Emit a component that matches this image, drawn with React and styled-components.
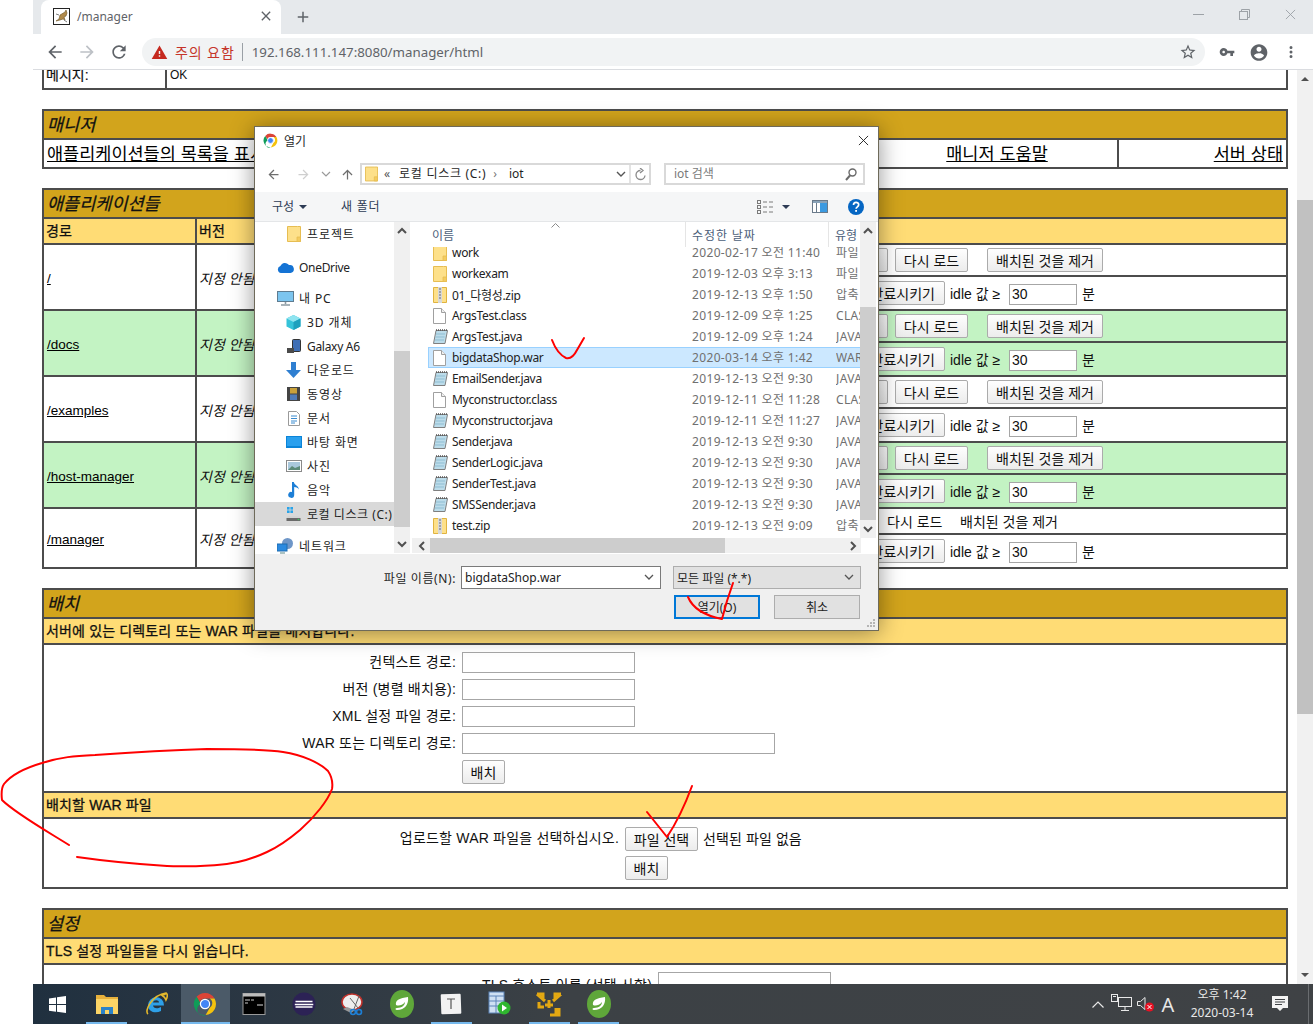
import React from 'react';
import styled, { createGlobalStyle } from 'styled-components';

const PAGE_FONT = '"Liberation Sans","Noto Sans CJK KR",sans-serif';
const UI_FONT = '"Noto Sans","Noto Sans CJK KR",sans-serif';
const COLS = '153px 130px 200px 70px 70px 1fr';

const Global = createGlobalStyle`
  html, body { margin: 0; padding: 0; background: #fff; }
  * { box-sizing: border-box; }
`;

const Root = styled.div`
  position: relative;
  width: 1313px;
  height: 1024px;
  overflow: hidden;
  padding-left: 33px;
  background: #fff;
  font-family: ${PAGE_FONT};
  color: #111;
`;
const Win = styled.div`
  display: flex;
  flex-direction: column;
  height: 100%;
`;

/* Chrome */
const TabStrip = styled.div`
  height: 34px;
  background: #e6e9ec;
  display: flex;
  align-items: flex-end;
  padding-left: 8px;
  flex: none;
`;
const Tab = styled.div`
  width: 240px;
  height: 34px;
  background: #fff;
  border-radius: 8px 8px 0 0;
  display: flex;
  align-items: center;
  padding: 0 10px 2px 12px;
  font: 12px ${UI_FONT};
  color: #5f6368;
`;
const TabTitle = styled.span`
  margin-left: 7px;
  flex: 1;
`;
const Plus = styled.div`
  margin: 0 0 8px 13px;
  height: 18px;
  width: 18px;
  color: #5f6368;
`;
const WinCtl = styled.div`
  margin-left: auto;
  display: flex;
  height: 34px;
  align-self: flex-start;
`;
const WinBtn = styled.div`
  width: 46px;
  height: 29px;
  display: flex;
  align-items: center;
  justify-content: center;
  color: #9da2a7;
`;
const ToolBar = styled.div`
  height: 36px;
  flex: none;
  background: #fff;
  border-bottom: 1px solid #dadce0;
  display: flex;
  align-items: center;
  padding: 1px 0 0 6px;
`;
const NavIcon = styled.div`
  width: 32px;
  flex: none;
  display: flex;
  justify-content: center;
  color: ${p => p.$c || '#5f6368'};
`;
const Omni = styled.div`
  margin-left: 7px;
  width: 1063px;
  flex: none;
  height: 28px;
  border-radius: 14px;
  background: #f1f3f4;
  display: flex;
  align-items: center;
  padding: 0 8px 0 9px;
`;
const WarnIcon = styled.span`
  color: #c5291f;
  display: flex;
`;
const Warn = styled.span`
  color: #c5352a;
  font: 14px ${UI_FONT};
  letter-spacing: 0.9px;
  margin-left: 7px;
`;
const Sep = styled.span`
  width: 1px;
  height: 18px;
  background: #9aa0a6;
  margin: 0 9px 0 7px;
`;
const Url = styled.span`
  font: 13.3px ${UI_FONT};
  color: #5f6368;
`;
const StarSlot = styled.span`
  margin-left: auto;
  display: flex;
  color: #5f6368;
`;
const RightIcon = styled.div`
  width: ${p => p.$w}px;
  flex: none;
  display: flex;
  justify-content: center;
  color: #5f6368;
`;

/* Page */
const Viewport = styled.div`
  flex: none;
  height: 914px;
  display: flex;
  overflow: hidden;
`;
const Page = styled.div`
  width: 1264px;
  padding: 0 9px;
  font-size: 14px;
`;
const Scrollbar = styled.div`
  width: 16px;
  background: #f1f1f1;
  display: flex;
  flex-direction: column;
`;
const Arrow = styled.div`
  height: 18px;
  display: flex;
  align-items: center;
  justify-content: center;
  flex: none;
`;
const Tri = styled.i`
  width: 0;
  height: 0;
  border-left: 4px solid transparent;
  border-right: 4px solid transparent;
  ${p => (p.$down ? 'border-top: 4px solid #505050;' : 'border-bottom: 4px solid #505050;')}
`;
const Thumb = styled.div`
  height: ${p => p.$h}px;
  margin-top: ${p => p.$mt || 0}px;
  background: ${p => p.$c || '#c1c1c1'};
  flex: none;
`;
const Spring_ = styled.div`
  flex: 1;
`;
const Section = styled.section`
  border: 2px solid #4c4c4c;
  margin-top: ${p => p.$mt ?? 19}px;
`;
const Title = styled.div`
  height: 27px;
  background: #d2a41c;
  font-style: italic;
  font-size: 17.5px;
  line-height: 29px;
  padding-left: 3px;
  -webkit-text-stroke: 0.25px #111;
  overflow: hidden;
`;
const Sub = styled.div`
  height: 24px;
  background: #ffdc75;
  border-top: 2px solid #4c4c4c;
  box-sizing: content-box;
  -webkit-text-stroke: 0.3px #111;
  letter-spacing: 0.15px;
  line-height: 24px;
  padding-left: ${p => (p.$grid ? 0 : 2)}px;
  display: ${p => (p.$grid ? 'grid' : 'block')};
  grid-template-columns: ${p => (p.$grid ? COLS : 'none')};
`;
const MsgRow = styled.div`
  height: 26px;
  display: flex;
  align-items: center;
`;
const MsgHead = styled.div`
  width: 123px;
  height: 100%;
  border-right: 2px solid #4c4c4c;
  padding-left: 2px;
  line-height: 26px;
  -webkit-text-stroke: 0.2px #111;
`;
const MsgText = styled.div`
  padding-left: 3px;
  font-size: 12px;
`;
const MgrRow = styled.div`
  height: 27px;
  border-top: 2px solid #4c4c4c;
  box-sizing: content-box;
  display: grid;
  grid-template-columns: 833px 242px 1fr;
  font-size: 17.5px;
  line-height: 29px;
`;
const MgrCell = styled.div`
  text-align: ${p => p.$a || 'left'};
  padding: 0 3px;
  border-right: ${p => (p.$line ? 2 : 0)}px solid #4c4c4c;
  white-space: nowrap;
  height: 27px;
  a { color: #000; text-decoration: underline; }
`;
const AppRowBox = styled.div`
  display: grid;
  grid-template-columns: ${COLS};
  border-top: 2px solid #4c4c4c;
  background: ${p => (p.$green ? '#c3f3c3' : '#fff')};
`;
const Cell = styled.div`
  border-right: 2px solid #4c4c4c;
  padding: 2px 0 0 ${p => (p.$i ? 2 : 3)}px;
  display: flex;
  align-items: center;
  font-style: ${p => (p.$i ? 'italic' : 'normal')};
  a { color: #000; text-decoration: underline; font-size: 13.5px; }
`;
const HeadCell = styled.div`
  border-right: 2px solid #4c4c4c;
  height: 24px;
  padding-left: 2px;
`;
const HeadLast = styled.div`
  padding-left: 2px;
`;
const Cmds = styled.div`
  display: flex;
  flex-direction: column;
`;
const CmdRow = styled.div`
  height: ${p => p.$h}px;
  display: flex;
  align-items: center;
  padding-left: ${p => p.$pl}px;
  border-top: ${p => (p.$line ? 2 : 0)}px solid #4c4c4c;
  box-sizing: content-box;
`;
const Btn = styled.button`
  width: ${p => p.$w}px;
  height: 24px;
  margin-left: ${p => p.$ml || 0}px;
  padding: 0;
  flex: none;
  font: 14px ${PAGE_FONT};
  color: #111;
  border: 1px solid #ababab;
  border-radius: 2px;
  background: linear-gradient(#fefefe, #ececec);
`;
const Plain = styled.span`
  width: ${p => p.$w}px;
  margin-left: ${p => p.$ml || 0}px;
  flex: none;
  white-space: nowrap;
`;
const Txt = styled.input`
  width: ${p => p.$w}px;
  height: 21px;
  flex: none;
  margin-left: ${p => p.$ml || 0}px;
  margin-top: ${p => p.$mt || 0}px;
  padding: 0 2px;
  font: 14px ${PAGE_FONT};
  color: #111;
  background: #fff;
  border: 1px solid #a6a6a6;
`;
const Form = styled.div`
  border-top: 2px solid #4c4c4c;
  height: ${p => p.$h}px;
  box-sizing: content-box;
  padding-top: ${p => p.$pt}px;
  display: flex;
  flex-direction: column;
`;
const Field = styled.div`
  height: ${p => p.$h || 27}px;
  display: grid;
  grid-template-columns: ${p => p.$label}px auto;
  column-gap: 6px;
  align-items: flex-start;
  justify-content: start;
`;
const Label = styled.div`
  text-align: right;
  line-height: ${p => p.$lh || 21}px;
  white-space: nowrap;
  letter-spacing: 0.2px;
`;
const Inline = styled.div`
  display: flex;
  align-items: center;
  gap: 5px;
  white-space: nowrap;
  letter-spacing: 0.1px;
`;
const Note = styled.span`
  margin-bottom: 3px;
`;

/* Taskbar */
const Taskbar = styled.div`
  height: 40px;
  flex: none;
  display: flex;
  background: linear-gradient(90deg, #20303f 0%, #2b3743 18%, #3c4145 42%, #3f4245 100%);
  color: #e8e8e8;
`;
const TaskItem = styled.div`
  position: relative;
  width: 49.2px;
  display: flex;
  align-items: center;
  justify-content: center;
  background: ${p => (p.$active ? '#4b5a68' : 'transparent')};
  &::after {
    content: '';
    display: ${p => (p.$open ? 'block' : 'none')};
    position: absolute;
    left: ${p => (p.$active ? 0 : 4)}px;
    right: ${p => (p.$active ? 0 : 4)}px;
    bottom: 0;
    height: 2px;
    background: #76b9ed;
  }
`;
const Tray = styled.div`
  margin-left: auto;
  display: flex;
  align-items: center;
`;
const TrayItem = styled.div`
  width: ${p => p.$w}px;
  display: flex;
  justify-content: center;
  align-items: center;
`;
const Clock = styled.div`
  width: 70px;
  margin: 0 1px 0 9px;
  text-align: center;
  font: 12px/18px ${UI_FONT};
`;
const Imeletter = styled.span`
  font: 20px ${UI_FONT};
  color: #e8e8e8;
`;
const EdgeLine = styled.div`
  width: 11px;
  height: 40px;
  position: relative;
  &::after {
    content: '';
    position: absolute;
    left: 6px;
    top: 0;
    bottom: 0;
    width: 1px;
    background: #6a6d70;
  }
`;

/* Dialog */
const Dialog = styled.div`
  position: absolute;
  left: 254px;
  top: 126px;
  width: 625px;
  height: 505px;
  background: #fff;
  border: 1px solid #6e6a5a;
  box-shadow: 0 2px 22px rgba(0, 0, 0, 0.42);
  display: flex;
  flex-direction: column;
  font: 12px ${UI_FONT};
  color: #1e1e1e;
`;
const DTitle = styled.div`
  height: 29px;
  flex: none;
  display: flex;
  align-items: center;
  padding: 0 9px 2px 8px;
  gap: 6px;
`;
const DClose = styled.div`
  margin-left: auto;
  display: flex;
`;
const DAddr = styled.div`
  height: 36px;
  flex: none;
  display: flex;
  padding-top: 7px;
`;
const Slot = styled.div`
  width: ${p => p.$w}px;
  height: 22px;
  flex: none;
  display: flex;
  align-items: center;
  justify-content: center;
  color: ${p => p.$c || '#6e6e6e'};
`;
const AddrBox = styled.div`
  width: ${p => p.$w}px;
  height: 22px;
  margin-left: ${p => p.$ml}px;
  border: 2px solid #d9d9d9;
  flex: none;
  display: flex;
  align-items: center;
  padding: 0 0 0 ${p => p.$pl || 3}px;
  color: ${p => p.$c || '#1e1e1e'};
  white-space: nowrap;
`;
const Crumb = styled.span`
  margin-left: ${p => p.$ml || 0}px;
  margin-bottom: 2px;
  color: ${p => p.$c || 'inherit'};
  letter-spacing: ${p => p.$ls || 0}px;
`;
const AddrEnd = styled.div`
  margin-left: auto;
  display: flex;
  align-items: center;
  height: 100%;
  padding-right: ${p => p.$pr || 0}px;
`;
const AddrDiv = styled.div`
  width: 20px;
  height: 100%;
  border-left: 2px solid #e3e3e3;
  margin-left: 3px;
  display: flex;
  align-items: center;
  justify-content: center;
  color: #8a8a8a;
`;
const DTools = styled.div`
  height: 30px;
  flex: none;
  background: #f5f6f7;
  border-bottom: 1px solid #e4e6e8;
  display: flex;
  align-items: center;
  padding-left: 17px;
  color: #2d3b55;
`;
const DropTri = styled.i`
  width: 0;
  height: 0;
  margin-left: ${p => p.$ml || 5}px;
  border-left: 4px solid transparent;
  border-right: 4px solid transparent;
  border-top: 4px solid #2d3b55;
`;
const ToolRight = styled.div`
  margin-left: auto;
  display: flex;
  align-items: center;
  padding-right: 14px;
`;
const ToolGap = styled.span`
  width: ${p => p.$w}px;
`;
const DBody = styled.div`
  height: 332px;
  flex: none;
  display: flex;
`;
const NavPane = styled.div`
  width: 139px;
  flex: none;
  overflow: hidden;
`;
const NavRow = styled.div`
  height: 24px;
  margin-top: ${p => p.$mt || 0}px;
  display: flex;
  align-items: center;
  padding-left: ${p => p.$pl}px;
  gap: 5px;
  white-space: nowrap;
  background: ${p => (p.$sel ? '#d9d9d9' : 'transparent')};
  letter-spacing: ${p => p.$ls ?? -0.3}px;
  color: #222;
`;
const NavGlyph = styled.span`
  width: 17px;
  flex: none;
  display: flex;
  justify-content: center;
`;
const DScroll = styled.div`
  width: 16px;
  flex: none;
  height: ${p => (p.$h ? p.$h + 'px' : 'auto')};
  background: #f0f0f0;
  display: flex;
  flex-direction: column;
  margin-right: ${p => p.$mr || 0}px;
`;
const Chev = styled.div`
  height: ${p => p.$h || 17}px;
  width: ${p => (p.$w ? p.$w + 'px' : 'auto')};
  flex: none;
  display: flex;
  align-items: center;
  justify-content: center;
  color: #505050;
`;
const ListWrap = styled.div`
  flex: 1;
  display: flex;
  flex-direction: column;
  min-width: 0;
`;
const ListTop = styled.div`
  height: 316px;
  display: flex;
`;
const ListMain = styled.div`
  width: 449px;
  display: flex;
  flex-direction: column;
`;
const ListHead = styled.div`
  height: 25px;
  flex: none;
  display: grid;
  grid-template-columns: 275px 143px 1fr;
  color: #4c607a;
  background: #fff;
  position: relative;
`;
const HeadCol = styled.div`
  padding: 4px 0 0 ${p => p.$pl}px;
  border-right: ${p => (p.$line ? 1 : 0)}px solid #e5e5e5;
  letter-spacing: ${p => p.$ls || 0}px;
  white-space: nowrap;
  overflow: hidden;
`;
const SortMark = styled.div`
  position: absolute;
  left: 140px;
  top: 1px;
  color: #8a8a8a;
  display: flex;
`;
const Rows = styled.div`
  flex: 1;
  overflow: hidden;
`;
const RowsInner = styled.div`
  margin: -5px 0 0 17px;
`;
const FileRow = styled.div`
  height: 21px;
  width: 433px;
  display: grid;
  grid-template-columns: 19px 240px 144px 25px;
  align-items: center;
  padding-left: 5px;
  background: ${p => (p.$sel ? '#cce8ff' : 'transparent')};
  box-shadow: ${p => (p.$sel ? 'inset 0 0 0 1px #99d1ff' : 'none')};
  white-space: nowrap;
`;
const FileName = styled.span`
  color: #222;
  letter-spacing: -0.3px;
`;
const FileMeta = styled.span`
  color: #707070;
  overflow: hidden;
  letter-spacing: 0.35px;
  margin-top: -1px;
`;
const HBar = styled.div`
  height: 15px;
  width: 449px;
  margin-left: 1px;
  background: #f0f0f0;
  display: flex;
  align-items: center;
`;
const HThumb = styled.div`
  height: 15px;
  width: 295px;
  background: #cdcdcd;
`;
const DFoot = styled.div`
  flex: 1;
  background: #f0f0f0;
  position: relative;
  display: flex;
  flex-direction: column;
  padding-top: 12px;
`;
const FootRow = styled.div`
  display: flex;
  align-items: center;
  justify-content: ${p => (p.$end ? 'flex-end' : 'flex-start')};
  gap: ${p => p.$gap || 0}px;
  margin-top: ${p => p.$mt || 0}px;
  padding-right: ${p => p.$pr || 0}px;
`;
const FootLabel = styled.div`
  width: 201px;
  text-align: right;
  letter-spacing: 0.6px;
`;
const Combo = styled.div`
  width: ${p => p.$w}px;
  height: 23px;
  margin-left: ${p => p.$ml}px;
  display: flex;
  align-items: center;
  justify-content: space-between;
  padding: 0 6px 0 3px;
  background: ${p => (p.$gray ? '#e1e1e1' : '#fff')};
  border: 1px solid ${p => (p.$gray ? '#adadad' : '#7a7a7a')};
  color: #222;
`;
const DlgBtn = styled.button`
  width: 86px;
  height: 24px;
  padding: 0;
  font: 12px ${UI_FONT};
  color: #222;
  background: #e1e1e1;
  border: ${p => (p.$primary ? '2px solid #0078d7' : '1px solid #adadad')};
`;
const Grip = styled.div`
  position: absolute;
  right: 2px;
  bottom: 2px;
  display: flex;
`;

const Ink = styled.svg`
  position: absolute;
  left: 0;
  top: 0;
  pointer-events: none;
`;

/* ---- icons ---- */
const M = ({ d, s = 20, fill = 'currentColor' }) => (
  <svg width={s} height={s} viewBox="0 0 24 24" fill={fill}><path d={d} /></svg>
);
const CX = ({ s = 12, w = 1 }) => (
  <svg width={s} height={s} viewBox="0 0 12 12" stroke="currentColor" strokeWidth={w} fill="none"><path d="M1 1l10 10M11 1L1 11" /></svg>
);
const ChevUp = ({ c = '#505050' }) => (
  <svg width="10" height="7" viewBox="0 0 10 7" fill="none" stroke={c} strokeWidth="2"><path d="M1 6l4-4 4 4" /></svg>
);
const ChevDown = ({ c = '#505050', w = 2 }) => (
  <svg width="10" height="7" viewBox="0 0 10 7" fill="none" stroke={c} strokeWidth={w}><path d="M1 1l4 4 4-4" /></svg>
);
const ChevSide = ({ left }) => (
  <svg width="7" height="10" viewBox="0 0 7 10" fill="none" stroke="#505050" strokeWidth="2">
    <path d={left ? 'M6 1L2 5l4 4' : 'M1 1l4 4-4 4'} />
  </svg>
);
const ChromeIcon = ({ s = 15 }) => (
  <svg width={s} height={s} viewBox="0 0 24 24">
    <path d="M12 1a11 11 0 0 1 9.500 5.500H12a5.500 5.500 0 0 0-5.200 3.600L3.600 4.800A11 11 0 0 1 12 1z" fill="#db4437" />
    <path d="M21.500 6.500A11 11 0 0 1 12.600 23l4.200-7.300a5.500 5.500 0 0 0 0-9.200z" fill="#f4c20d" />
    <path d="M3.600 4.800l4.200 7.200a5.500 5.500 0 0 0 4.800 11A11 11 0 0 1 3.600 4.800z" fill="#0f9d58" />
    <circle cx="12" cy="12" r="4.600" fill="#4285f4" stroke="#fff" strokeWidth="1.200" />
  </svg>
);
const TomcatIcon = () => (
  <svg width="17" height="17" viewBox="0 0 17 17">
    <rect x=".5" y=".5" width="16" height="16" fill="#fff" stroke="#222" />
    <path d="M3 13l3-2 1-4 5-3 1-2 1 3-1 3-2 1 1 3-2-1-3 1z" fill="#b08a4a" stroke="#6b5222" strokeWidth=".6" />
    <path d="M3 6l3 1M11 12l3 2" stroke="#7d7d7d" strokeWidth="1" />
  </svg>
);
const Folder = ({ s = 14, h = 16 }) => (
  <svg width={s} height={h} viewBox="0 0 14 16">
    <path d="M.5.5h10l3 0v15H.5z" fill="#fde08a" stroke="#e6bd52" />
    <path d="M10 11v4.500h3.500V11z" fill="#f4cc60" stroke="#e6bd52" strokeWidth=".8" />
  </svg>
);
const Zip = () => (
  <svg width="14" height="16" viewBox="0 0 14 16">
    <path d="M.5.5h13v15H.5z" fill="#fde08a" stroke="#e0b440" />
    <rect x="5" y="0" width="4" height="16" fill="#d8d8d8" />
    <path d="M6 2h2M6 5h2M6 8h2M6 11h2" stroke="#6a6a6a" />
  </svg>
);
const Doc = () => (
  <svg width="13" height="16" viewBox="0 0 13 16">
    <path d="M.5.5h8l4 4v11H.5z" fill="#fff" stroke="#a0a0a0" />
    <path d="M8.500.5v4h4" fill="#f0f0f0" stroke="#a0a0a0" />
  </svg>
);
const Java = () => (
  <svg width="15" height="15" viewBox="0 0 15 15">
    <path d="M3 1.500h11.500L12 14.500H.5z" fill="#bcdcea" stroke="#7f7f7f" />
    <path d="M3 1h11" stroke="#555" strokeDasharray="1 1" strokeWidth="1.500" />
    <path d="M3 5h9M2.600 8h9M2 11h9" stroke="#8fbdd2" />
  </svg>
);
const Cloud = () => (
  <svg width="17" height="11" viewBox="0 0 17 11">
    <path d="M4 11a3.600 3.600 0 0 1-.6-7A5 5 0 0 1 12 3a4 4 0 0 1 1.500 8z" fill="#1473d4" />
  </svg>
);
const Monitor = () => (
  <svg width="17" height="15" viewBox="0 0 17 15">
    <rect x=".5" y=".5" width="16" height="10" fill="#7cc5ef" stroke="#5f7c90" />
    <path d="M8.500 11v2M4 14h9" stroke="#8c9aa3" strokeWidth="1.600" />
  </svg>
);
const Cube = () => (
  <svg width="15" height="15" viewBox="0 0 15 15">
    <path d="M7.500 0l7 3.500v8L7.500 15 .5 11.500v-8z" fill="#35c3d9" />
    <path d="M7.500 0l7 3.500-7 3.500-7-3.500z" fill="#8fe4f0" />
    <path d="M7.500 7v8l7-3.500v-8z" fill="#1ea0bd" />
  </svg>
);
const Phone = () => (
  <svg width="14" height="15" viewBox="0 0 14 15">
    <rect x="5.500" y=".5" width="8" height="12" rx="1" fill="#3f6fb5" stroke="#333" />
    <rect x="0" y="9" width="7" height="5" fill="#4a4a4a" />
  </svg>
);
const Down = () => (
  <svg width="15" height="16" viewBox="0 0 15 16"><path d="M5 0h5v8h5l-7.500 8L0 8h5z" fill="#2f7fd1" /></svg>
);
const Film = () => (
  <svg width="13" height="14" viewBox="0 0 13 14">
    <rect width="13" height="14" fill="#444" />
    <rect x="3" y="1" width="7" height="5.500" fill="#c9a13a" />
    <rect x="3" y="7.500" width="7" height="5.500" fill="#4f7cb8" />
  </svg>
);
const DocLines = () => (
  <svg width="12" height="15" viewBox="0 0 12 15">
    <path d="M.5.5h8l3 3v11H.5z" fill="#fff" stroke="#9a9a9a" />
    <path d="M3 5h6M3 7.500h6M3 10h6M3 12h4" stroke="#3a8cd0" />
  </svg>
);
const Desk = () => (
  <svg width="16" height="12" viewBox="0 0 16 12"><rect width="16" height="12" fill="#0a84d8" /><rect x="1" y="1" width="14" height="9" fill="#2aa0ee" /></svg>
);
const Photo = () => (
  <svg width="16" height="12" viewBox="0 0 16 12">
    <rect x=".5" y=".5" width="15" height="11" fill="#fff" stroke="#8a8a8a" />
    <rect x="2" y="2" width="12" height="8" fill="#a9c8dc" />
    <path d="M2 10l4-4 3 2 5-2v4z" fill="#5b8a78" />
  </svg>
);
const Music = () => (
  <svg width="12" height="16" viewBox="0 0 12 16"><path d="M4 0h1.800c.4 3 5 3.500 5 7.500-1-1.800-3-2.200-4.600-2.400V13a3 3 0 1 1-2.200-3z" fill="#1d7fd6" /></svg>
);
const Disk = () => (
  <svg width="15" height="14" viewBox="0 0 15 14">
    <rect x="1" y="0" width="2.600" height="2.600" fill="#29a3e8" /><rect x="4.400" y="0" width="2.600" height="2.600" fill="#29a3e8" />
    <rect x="1" y="3.400" width="2.600" height="2.600" fill="#29a3e8" /><rect x="4.400" y="3.400" width="2.600" height="2.600" fill="#29a3e8" />
    <path d="M2 9h11l1.500 2v3H.5v-3z" fill="#d4d4d4" /><rect x=".5" y="11" width="14" height="3" fill="#6a6a6a" />
    <circle cx="12.500" cy="12.500" r=".8" fill="#34d058" />
  </svg>
);
const Network = () => (
  <svg width="17" height="16" viewBox="0 0 17 16">
    <circle cx="10.500" cy="5.500" r="5.500" fill="#6e96c8" />
    <rect y="6" width="10" height="7" fill="#2b8ae0" stroke="#1f6cb0" />
    <path d="M3 15h5" stroke="#8aa" strokeWidth="1.400" />
  </svg>
);
const WinLogo = () => (
  <svg width="17" height="17" viewBox="0 0 17 17" fill="#fff">
    <path d="M0 2.400l7-1v6.700H0zM8 1.200L17 0v8.100H8zM0 9h7v6.700l-7-1zM8 9h9v8l-9-1.200z" />
  </svg>
);
const Explorer = () => (
  <svg width="22" height="22" viewBox="0 0 22 22">
    <path d="M0 2h8l2 2h12v16H0z" fill="#e7b13c" />
    <rect y="6" width="22" height="15" fill="#fbd466" />
    <rect x="5" y="14" width="12" height="7" fill="#2a82c9" />
    <rect x="9" y="17" width="4" height="4" fill="#fbd466" />
  </svg>
);
const IE = () => (
  <svg width="24" height="24" viewBox="0 0 24 24">
    <path d="M12 5a8 8 0 0 1 8 8.500H9c.3 2.500 3.600 4 8 1.500v4c-5.400 3-13 1-13-6a8.500 8.500 0 0 1 8-8zM9 10.500h6c0-3-5.500-3-6 0z" fill="#2ea0e8" />
    <path d="M4 22C0 19 8 3 22 1c1.500 1 1.500 4 0 7-1-3-3-4-4-4.600 2-1 3-1 3.500-.4" fill="none" stroke="#e5b92c" strokeWidth="1.600" />
  </svg>
);
const Cmd = () => (
  <svg width="24" height="24" viewBox="0 0 24 24">
    <rect x="1" y="1.500" width="22" height="21" fill="#000" stroke="#9a9a9a" />
    <rect x="1" y="1.500" width="22" height="3" fill="#bdbdbd" />
    <path d="M3 8h5M9 8h3M3 11h3" stroke="#ccc" />
    <path d="M15 13h6" stroke="#ddd" />
  </svg>
);
const Eclipse = () => (
  <svg width="24" height="24" viewBox="0 0 24 24">
    <circle cx="12" cy="12" r="11.500" fill="#2c2255" />
    <path d="M12 .5a11.500 11.500 0 0 0 0 23 11 11 0 0 1 0-23z" fill="#f7941e" />
    <path d="M3.500 9.500h17M2.800 12.500h18.500M3.500 15h17" stroke="#fff" strokeWidth="1.500" />
  </svg>
);
const Snip = () => (
  <svg width="26" height="24" viewBox="0 0 26 24">
    <ellipse cx="12" cy="10" rx="10" ry="8" fill="#eee" stroke="#c0312b" strokeWidth="1.500" />
    <path d="M3 17l8 4 4-3-8-3z" fill="#999" />
    <path d="M10 6l8 10M19 4l-5 13" stroke="#666" />
    <circle cx="19" cy="20" r="2.500" fill="none" stroke="#1d7fd6" strokeWidth="1.600" />
    <circle cx="13" cy="20" r="2.500" fill="none" stroke="#1d7fd6" strokeWidth="1.600" />
  </svg>
);
const Spring = () => (
  <svg width="24" height="28" viewBox="0 0 24 28">
    <ellipse cx="12" cy="14" rx="12" ry="14" fill="#5fa73a" />
    <path d="M18 7c1 7-3 13-11 13-2 0-2-2 0-2 5 0 8-3 8-6-3 4-7 4-9 3-1-5 4-7 12-8z" fill="#fff" />
  </svg>
);
const TDoc = () => (
  <svg width="22" height="22" viewBox="0 0 22 22">
    <rect x="1" y="1" width="20" height="20" rx="1" fill="#f2f2f2" transform="rotate(-2 11 11)" />
    <path d="M7 6h8M11 6v10" stroke="#555" strokeWidth="1.200" />
  </svg>
);
const DbPlay = () => (
  <svg width="26" height="26" viewBox="0 0 26 26">
    <rect x="2" y="1" width="15" height="21" fill="#cfe0f2" stroke="#5d84b8" />
    <path d="M2 5h15M2 10h15M2 15h15M9 5v17" stroke="#5d84b8" />
    <circle cx="17" cy="17" r="6.500" fill="#2fb62f" />
    <path d="M15 13.500l5 3.500-5 3.500z" fill="#fff" />
  </svg>
);
const ArrowGrid = () => (
  <svg width="26" height="26" viewBox="0 0 26 26" fill="none" stroke="#e3a812" strokeWidth="3">
    <path d="M1 3h6v4M1 3l8 7M25 3h-6v4M25 3l-8 7M13 9v8M9 14h8M14 24h9v-7M20 17v7M3 11v5h5" />
  </svg>
);
const Net = () => (
  <svg width="22" height="20" viewBox="0 0 22 20" fill="none" stroke="#e8e8e8">
    <rect x="7.500" y="3.500" width="13" height="9" /><path d="M14 12.500v4M10 16.500h8" />
    <rect x=".5" y=".5" width="6" height="7" fill="#3d4145" />
    <path d="M2 2.500h3" />
  </svg>
);
const Vol = () => (
  <svg width="18" height="16" viewBox="0 0 18 16">
    <path d="M.5 5.500h3L8 1.500v12l-4.500-4h-3z" fill="none" stroke="#e8e8e8" />
    <rect x="8" y="6.500" width="9" height="9" rx="4.500" fill="#e81123" />
    <path d="M10.500 9l4 4M14.500 9l-4 4" stroke="#fff" />
  </svg>
);
const Notify = () => (
  <svg width="16" height="16" viewBox="0 0 16 16">
    <path d="M0 0h16v12h-5l-3 3-3-3H0z" fill="#f3f3f3" />
    <path d="M3 3.500h10M3 6h10M3 8.500h7" stroke="#3f4245" />
  </svg>
);
const ListView = () => (
  <svg width="17" height="14" viewBox="0 0 17 14" fill="none" stroke="#7a7a7a">
    <rect x=".5" y=".5" width="3" height="3" /><rect x=".5" y="5.500" width="3" height="3" /><rect x=".5" y="10.500" width="3" height="3" />
    <path d="M6 2h4M12 2h4M6 7h4M12 7h4M6 12h4M12 12h4" />
  </svg>
);
const PaneIcon = () => (
  <svg width="16" height="13" viewBox="0 0 16 13">
    <rect x=".5" y=".5" width="15" height="12" fill="#fff" stroke="#6a7a8a" />
    <rect x="8" y="1" width="7" height="11" fill="#3b9ae1" />
    <path d="M4.500 1v11" stroke="#6a7a8a" />
    <rect x="1" y="1" width="14" height="2" fill="#8aa3b8" />
  </svg>
);
const Help = () => (
  <svg width="16" height="16" viewBox="0 0 16 16">
    <circle cx="8" cy="8" r="8" fill="#0566c3" />
    <path d="M5.500 6c0-3.400 5.200-3.400 5.200-.2 0 2-2.600 2-2.600 4" fill="none" stroke="#fff" strokeWidth="1.700" />
    <rect x="7.200" y="11" width="1.800" height="1.800" fill="#fff" />
  </svg>
);
const GripDots = () => (
  <svg width="10" height="10" viewBox="0 0 10 10" fill="#b5b5b5">
    <rect x="7" y="1" width="2" height="2" /><rect x="4" y="4" width="2" height="2" /><rect x="7" y="4" width="2" height="2" />
    <rect x="1" y="7" width="2" height="2" /><rect x="4" y="7" width="2" height="2" /><rect x="7" y="7" width="2" height="2" />
  </svg>
);

const apps = [
  { path: '/', green: false },
  { path: '/docs', green: true },
  { path: '/examples', green: false },
  { path: '/host-manager', green: true },
  { path: '/manager', green: false, self: true },
];

const files = [
  ['work', '2020-02-17 오전 11:40', '파일', Folder],
  ['workexam', '2019-12-03 오후 3:13', '파일', Folder],
  ['01_다형성.zip', '2019-12-13 오후 1:50', '압축', Zip],
  ['ArgsTest.class', '2019-12-09 오후 1:25', 'CLASS', Doc],
  ['ArgsTest.java', '2019-12-09 오후 1:24', 'JAVA', Java],
  ['bigdataShop.war', '2020-03-14 오후 1:42', 'WAR', Doc, true],
  ['EmailSender.java', '2019-12-13 오전 9:30', 'JAVA', Java],
  ['Myconstructor.class', '2019-12-11 오전 11:28', 'CLASS', Doc],
  ['Myconstructor.java', '2019-12-11 오전 11:27', 'JAVA', Java],
  ['Sender.java', '2019-12-13 오전 9:30', 'JAVA', Java],
  ['SenderLogic.java', '2019-12-13 오전 9:30', 'JAVA', Java],
  ['SenderTest.java', '2019-12-13 오전 9:30', 'JAVA', Java],
  ['SMSSender.java', '2019-12-13 오전 9:30', 'JAVA', Java],
  ['test.zip', '2019-12-13 오전 9:09', '압축', Zip],
];

const navItems = [
  { t: '프로젝트', I: Folder, pl: 30, ls: 0.9 },
  { t: 'OneDrive', I: Cloud, pl: 22, mt: 9 },
  { t: '내 PC', I: Monitor, pl: 22, mt: 7, ls: 0.9 },
  { t: '3D 개체', I: Cube, pl: 30, ls: 0.9 },
  { t: 'Galaxy A6', I: Phone, pl: 30 },
  { t: '다운로드', I: Down, pl: 30, ls: 0.9 },
  { t: '동영상', I: Film, pl: 30, ls: 0.9 },
  { t: '문서', I: DocLines, pl: 30, ls: 0.9 },
  { t: '바탕 화면', I: Desk, pl: 30, ls: 0.9 },
  { t: '사진', I: Photo, pl: 30, ls: 0.9 },
  { t: '음악', I: Music, pl: 30, ls: 0.9 },
  { t: '로컬 디스크 (C:)', I: Disk, pl: 30, sel: true, ls: 0.55 },
  { t: '네트워크', I: Network, pl: 22, mt: 8, ls: 0.9 },
];

function AppBlock({ a }) {
  return (
    <AppRowBox $green={a.green}>
      <Cell><a href="#">{a.path}</a></Cell>
      <Cell $i>지정 안됨</Cell>
      <Cell />
      <Cell>true</Cell>
      <Cell>0</Cell>
      <Cmds>
        {a.self ? (
          <CmdRow $h={24} $pl={220}>
            <Plain $w={73}>다시 로드</Plain>
            <Plain>배치된 것을 제거</Plain>
          </CmdRow>
        ) : (
          <CmdRow $h={30} $pl={103}>
            <Btn $w={55}>시작</Btn>
            <Btn $w={55} $ml={8}>중지</Btn>
            <Btn $w={73} $ml={7}>다시 로드</Btn>
            <Btn $w={116} $ml={19}>배치된 것을 제거</Btn>
          </CmdRow>
        )}
        <CmdRow $h={32} $pl={138} $line>
          <Btn $w={140}>세션들을 만료시키기</Btn>
          <Plain $w={59} $ml={5}>idle 값 ≥</Plain>
          <Txt $w={68} $mt={2} defaultValue="30" />
          <Plain $ml={5}>분</Plain>
        </CmdRow>
      </Cmds>
    </AppRowBox>
  );
}

export default function App() {
  return (
    <Root>
      <Global />
      <Win>
        <TabStrip>
          <Tab>
            <TomcatIcon />
            <TabTitle>/manager</TabTitle>
            <CX s={10} w={1.6} />
          </Tab>
          <Plus><M s={18} d="M19 13h-6v6h-2v-6H5v-2h6V5h2v6h6v2z" /></Plus>
          <WinCtl>
            <WinBtn><svg width="11" height="2"><rect width="11" height="1" fill="currentColor" /></svg></WinBtn>
            <WinBtn>
              <svg width="11" height="11" viewBox="0 0 11 11" fill="none" stroke="currentColor"><rect x=".5" y="2.500" width="8" height="8" /><path d="M2.500 2V.5h8v8H9" /></svg>
            </WinBtn>
            <WinBtn><CX s={11} /></WinBtn>
          </WinCtl>
        </TabStrip>
        <ToolBar>
          <NavIcon><M d="M20 11H7.830l5.590-5.590L12 4l-8 8 8 8 1.410-1.410L7.830 13H20v-2z" /></NavIcon>
          <NavIcon $c="#bdc1c6"><M d="M4 13h12.170l-5.590 5.590L12 20l8-8-8-8-1.410 1.410L16.170 11H4v2z" /></NavIcon>
          <NavIcon><M d="M17.650 6.350A7.958 7.958 0 0 0 12 4c-4.420 0-7.990 3.580-7.990 8s3.570 8 7.990 8c3.730 0 6.840-2.550 7.730-6h-2.080A5.990 5.990 0 0 1 12 18c-3.310 0-6-2.690-6-6s2.690-6 6-6c1.660 0 3.140.690 4.220 1.780L13 11h7V4l-2.350 2.350z" /></NavIcon>
          <Omni>
            <WarnIcon><M s={17} d="M1 21h22L12 2 1 21zm12-3h-2v-2h2v2zm0-4h-2v-4h2v4z" /></WarnIcon>
            <Warn>주의 요함</Warn>
            <Sep />
            <Url>192.168.111.147:8080/manager/html</Url>
            <StarSlot>
              <M s={18} d="M22 9.240l-7.190-.620L12 2 9.190 8.630 2 9.240l5.460 4.730L5.820 21 12 17.270 18.180 21l-1.630-7.030L22 9.240zM12 15.400l-3.760 2.270 1-4.280-3.320-2.880 4.380-.380L12 6.100l1.710 4.040 4.380.380-3.320 2.880 1 4.280L12 15.400z" />
            </StarSlot>
          </Omni>
          <RightIcon $w={44}><M s={16} d="M12.650 10C11.830 7.670 9.610 6 7 6c-3.310 0-6 2.690-6 6s2.690 6 6 6c2.610 0 4.830-1.670 5.650-4H17v4h4v-4h2v-4H12.650zM7 14c-1.100 0-2-.900-2-2s.900-2 2-2 2 .900 2 2-.900 2-2 2z" /></RightIcon>
          <RightIcon $w={20}><M s={23} d="M12 2C6.480 2 2 6.480 2 12s4.480 10 10 10 10-4.480 10-10S17.520 2 12 2zm0 3c1.660 0 3 1.340 3 3s-1.340 3-3 3-3-1.340-3-3 1.340-3 3-3zm0 14.200c-2.500 0-4.710-1.280-6-3.220.030-1.990 4-3.080 6-3.080 1.990 0 5.970 1.090 6 3.080-1.290 1.940-3.500 3.220-6 3.220z" /></RightIcon>
          <RightIcon $w={44}><M s={18} d="M12 8a2 2 0 1 0 0-4 2 2 0 0 0 0 4zm0 2a2 2 0 1 0 0 4 2 2 0 0 0 0-4zm0 6a2 2 0 1 0 0 4 2 2 0 0 0 0-4z" /></RightIcon>
        </ToolBar>

        <Viewport>
          <Page>
            <Section $mt={-10}>
              <MsgRow>
                <MsgHead>메시지:</MsgHead>
                <MsgText>OK</MsgText>
              </MsgRow>
            </Section>

            <Section>
              <Title>매니저</Title>
              <MgrRow>
                <MgrCell $line><a href="#">애플리케이션들의 목록을 표시합니다</a></MgrCell>
                <MgrCell $a="center" $line><a href="#">매니저 도움말</a></MgrCell>
                <MgrCell $a="right"><a href="#">서버 상태</a></MgrCell>
              </MgrRow>
            </Section>

            <Section>
              <Title>애플리케이션들</Title>
              <Sub $grid>
                <HeadCell>경로</HeadCell>
                <HeadCell>버전</HeadCell>
                <HeadCell>표시 이름</HeadCell>
                <HeadCell>실행 중</HeadCell>
                <HeadCell>세션들</HeadCell>
                <HeadLast>커맨드들</HeadLast>
              </Sub>
              {apps.map(a => <AppBlock key={a.path} a={a} />)}
            </Section>

            <Section>
              <Title>배치</Title>
              <Sub>서버에 있는 디렉토리 또는 WAR 파일을 배치합니다.</Sub>
              <Form $h={139} $pt={7}>
                <Field $label={412}><Label>컨텍스트 경로:</Label><Txt $w={173} /></Field>
                <Field $label={412}><Label>버전 (병렬 배치용):</Label><Txt $w={173} /></Field>
                <Field $label={412}><Label>XML 설정 파일 경로:</Label><Txt $w={173} /></Field>
                <Field $label={412}><Label>WAR 또는 디렉토리 경로:</Label><Txt $w={313} /></Field>
                <Field $label={412} $h={24}><span /><Btn $w={43}>배치</Btn></Field>
              </Form>
              <Sub>배치할 WAR 파일</Sub>
              <Form $h={60} $pt={8}>
                <Field $label={575} $h={29}>
                  <Label $lh={22}>업로드할 WAR 파일을 선택하십시오.</Label>
                  <Inline><Btn $w={73}>파일 선택</Btn><Note>선택된 파일 없음</Note></Inline>
                </Field>
                <Field $label={575} $h={24}><span /><Btn $w={43}>배치</Btn></Field>
              </Form>
            </Section>

            <Section>
              <Title>설정</Title>
              <Sub>TLS 설정 파일들을 다시 읽습니다.</Sub>
              <Form $h={60} $pt={7}>
                <Field $label={608}><Label $lh={27}>TLS 호스트 이름 (선택 사항)</Label><Txt $w={173} /></Field>
              </Form>
            </Section>
          </Page>
          <Scrollbar>
            <Arrow><Tri /></Arrow>
            <Thumb $h={514} $mt={112} />
            <Spring_ />
            <Arrow><Tri $down /></Arrow>
          </Scrollbar>
        </Viewport>

        <Taskbar>
          <TaskItem><WinLogo /></TaskItem>
          <TaskItem $open><Explorer /></TaskItem>
          <TaskItem><IE /></TaskItem>
          <TaskItem $open $active><ChromeIcon s={24} /></TaskItem>
          <TaskItem><Cmd /></TaskItem>
          <TaskItem><Eclipse /></TaskItem>
          <TaskItem><Snip /></TaskItem>
          <TaskItem><Spring /></TaskItem>
          <TaskItem $open><TDoc /></TaskItem>
          <TaskItem><DbPlay /></TaskItem>
          <TaskItem $open><ArrowGrid /></TaskItem>
          <TaskItem $open><Spring /></TaskItem>
          <Tray>
            <TrayItem $w={24}>
              <svg width="12" height="7" viewBox="0 0 12 7" fill="none" stroke="#e8e8e8" strokeWidth="1.200"><path d="M.5 6.500L6 1l5.500 5.500" /></svg>
            </TrayItem>
            <TrayItem $w={24}><Net /></TrayItem>
            <TrayItem $w={24}><Vol /></TrayItem>
            <TrayItem $w={20}><Imeletter>A</Imeletter></TrayItem>
            <Clock>오후 1:42<br />2020-03-14</Clock>
            <TrayItem $w={44}><Notify /></TrayItem>
            <EdgeLine />
          </Tray>
        </Taskbar>
      </Win>

      <Dialog>
        <DTitle>
          <ChromeIcon />
          <span>열기</span>
          <DClose><CX s={11} /></DClose>
        </DTitle>
        <DAddr>
          <Slot $w={36}><M s={15} d="M20 11H7.830l5.590-5.590L12 4l-8 8 8 8 1.410-1.410L7.830 13H20v-2z" /></Slot>
          <Slot $w={24} $c="#cfcfcf"><M s={15} d="M4 13h12.170l-5.590 5.590L12 20l8-8-8-8-1.410 1.410L16.170 11H4v2z" /></Slot>
          <Slot $w={22}><ChevDown c="#9a9a9a" w={1.200} /></Slot>
          <Slot $w={20}><M s={15} d="M4 12l1.410 1.410L11 7.830V20h2V7.830l5.580 5.590L20 12l-8-8-8 8z" /></Slot>
          <AddrBox $w={291} $ml={3}>
            <Folder s={13} h={16} />
            <Crumb $ml={6} $c="#555">«</Crumb>
            <Crumb $ml={9} $ls={0.7}>로컬 디스크 (C:)</Crumb>
            <Crumb $ml={7} $c="#777">›</Crumb>
            <Crumb $ml={12}>iot</Crumb>
            <AddrEnd>
              <ChevDown c="#555" w={1.400} />
              <AddrDiv>
                <svg width="11" height="13" viewBox="0 0 11 13" fill="none" stroke="currentColor" strokeWidth="1.300"><path d="M5.500 2.500a4.500 4.500 0 1 0 4.500 5M5 0l3 2.500L5 5" /></svg>
              </AddrDiv>
            </AddrEnd>
          </AddrBox>
          <AddrBox $w={201} $ml={13} $pl={8} $c="#7a7a7a">
            <Crumb>iot 검색</Crumb>
            <AddrEnd $pr={6}>
              <svg width="12" height="13" viewBox="0 0 12 13" fill="none" stroke="#6a6a6a" strokeWidth="1.400"><circle cx="7.500" cy="4.500" r="3.500" /><path d="M5 7.500L1 12" strokeWidth="2" /></svg>
            </AddrEnd>
          </AddrBox>
        </DAddr>
        <DTools>
          <Crumb>구성</Crumb>
          <DropTri />
          <Crumb $ml={34} $ls={0.7}>새 폴더</Crumb>
          <ToolRight>
            <ListView />
            <DropTri $ml={8} />
            <ToolGap $w={22} />
            <PaneIcon />
            <ToolGap $w={20} />
            <Help />
          </ToolRight>
        </DTools>
        <DBody>
          <NavPane>
            {navItems.map(({ t, I, pl, mt, sel, ls }) => (
              <NavRow key={t} $pl={pl} $mt={mt} $sel={sel} $ls={ls}><NavGlyph><I /></NavGlyph>{t}</NavRow>
            ))}
          </NavPane>
          <DScroll $h={331} $mr={1}>
            <Chev><ChevUp /></Chev>
            <Thumb $h={176} $mt={112} $c="#cdcdcd" />
            <Spring_ />
            <Chev><ChevDown /></Chev>
          </DScroll>
          <ListWrap>
            <ListTop>
              <ListMain>
                <ListHead>
                  <HeadCol $pl={21} $line>이름</HeadCol>
                  <HeadCol $pl={6} $line $ls={0.9}>수정한 날짜</HeadCol>
                  <HeadCol $pl={6}>유형</HeadCol>
                  <SortMark>
                    <svg width="9" height="5" viewBox="0 0 9 5" fill="none" stroke="currentColor"><path d="M.5 4.500l4-4 4 4" /></svg>
                  </SortMark>
                </ListHead>
                <Rows>
                  <RowsInner>
                    {files.map(([n, d, ty, I, sel]) => (
                      <FileRow key={n} $sel={sel}>
                        <I />
                        <FileName>{n}</FileName>
                        <FileMeta>{d}</FileMeta>
                        <FileMeta>{ty}</FileMeta>
                      </FileRow>
                    ))}
                  </RowsInner>
                </Rows>
              </ListMain>
              <DScroll>
                <Chev><ChevUp /></Chev>
                <Thumb $h={213} $mt={68} $c="#cdcdcd" />
                <Spring_ />
                <Chev><ChevDown /></Chev>
              </DScroll>
            </ListTop>
            <HBar>
              <Chev $h={15} $w={18}><ChevSide left /></Chev>
              <HThumb />
              <Spring_ />
              <Chev $h={15} $w={16}><ChevSide /></Chev>
            </HBar>
          </ListWrap>
        </DBody>
        <DFoot>
          <FootRow>
            <FootLabel>파일 이름(N):</FootLabel>
            <Combo $w={200} $ml={5}>bigdataShop.war<ChevDown c="#555" w={1.300} /></Combo>
            <Combo $w={188} $ml={12} $gray>모든 파일 (*.*)<ChevDown c="#555" w={1.300} /></Combo>
          </FootRow>
          <FootRow $end $gap={14} $mt={6} $pr={18}>
            <DlgBtn $primary>열기(O)</DlgBtn>
            <DlgBtn>취소</DlgBtn>
          </FootRow>
          <Grip><GripDots /></Grip>
        </DFoot>
      </Dialog>

      <Ink width="1313" height="1024" fill="none" stroke="#f00" strokeWidth="2" strokeLinecap="round" strokeLinejoin="round">
        <path d="M69 845C45 830 15 813 2 800C1 792 2 787 4 784C12 774 25 768 42 763C60 757 75 756 95 755C135 752 170 750 207 749C235 749 265 749 283 752C303 755 320 763 328 771C332 777 333 783 332 789C328 800 315 817 300 830C287 841 278 847 267 852C250 860 235 864 217 865C200 866 185 867 167 866C135 864 105 861 77 857" />
        <path d="M552 340C555 348 560 355 566 358C570 359 574 356 577 350L584 338" />
        <path d="M688 597C693 609 707 616 722 619C725 607 729 594 733 583" />
        <path d="M647 812L667 837C677 822 685 805 692 786" />
      </Ink>
    </Root>
  );
}
